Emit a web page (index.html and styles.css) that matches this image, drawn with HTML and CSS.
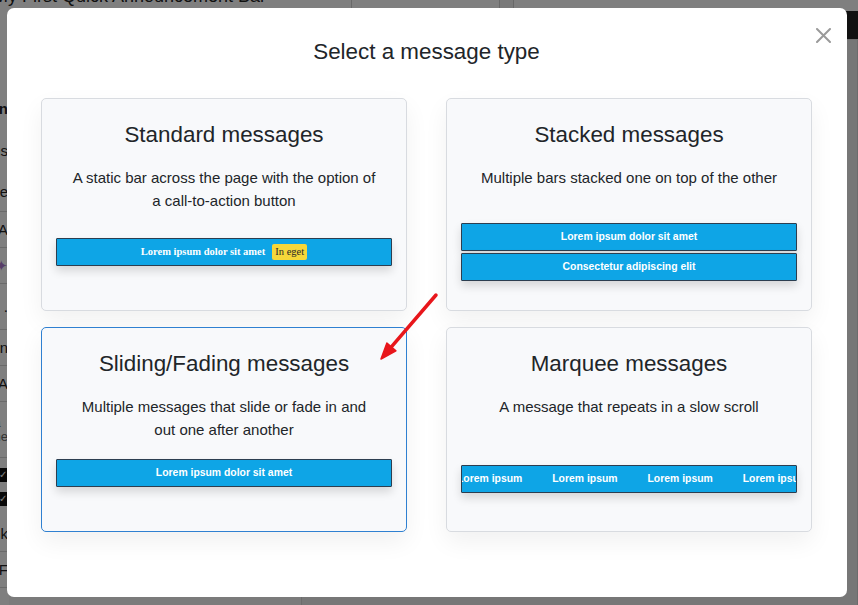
FILE: index.html
```html
<!DOCTYPE html>
<html lang="en">
<head>
<meta charset="utf-8">
<title>Select a message type</title>
<link rel="stylesheet" href="styles.css">
</head>
<body>
<div class="page">
  <aside class="rail">
    <div class="rail-row rail-row--tall"></div>
    <div class="rail-row rail-row--r1"><b>Section</b></div>
    <div class="rail-row rail-row--r2">Options</div>
    <div class="rail-row rail-row--r3 rail-row--line">Title</div>
    <div class="rail-row rail-row--line">Text A</div>
    <div class="rail-row rail-row--line"><span class="rail-diamond">&#10022;</span></div>
    <div class="rail-row rail-row--line rail-row--mid">.</div>
    <div class="rail-row rail-row--line">Margin</div>
    <div class="rail-row rail-row--line">Size A</div>
    <div class="rail-row rail-row--two rail-row--line"><span class="rail-muted">data<br>name</span></div>
    <div class="rail-row rail-row--checks"><span class="rail-check">&#10003;</span><span class="rail-check">&#10003;</span></div>
    <div class="rail-row rail-row--line">Link</div>
    <div class="rail-row rail-row--line">F</div>
  </aside>
  <main class="main">
    <header class="main-head">
      <div class="head-title">My First Quick Announcement Bar</div>
      <div class="head-cell"></div>
      <div class="head-cell head-cell--grey"></div>
      <div class="head-side">
        <div class="head-dark"></div>
      </div>
    </header>
    <div class="main-body">
      <div class="body-col"></div>
      <div class="body-col body-col--wide"></div>
    </div>
  </main>
</div>

<div class="overlay">
  <div class="modal">
    <button class="modal-close" aria-label="Close">
      <svg viewBox="0 0 15 15" width="15" height="15"><path d="M1 1 L14 14 M14 1 L1 14" stroke="#9a9a9a" stroke-width="2" stroke-linecap="round" fill="none"/></svg>
    </button>
    <h2 class="modal-title">Select a message type</h2>
    <div class="type-grid">
      <div class="type-card">
        <h3 class="type-title">Standard messages</h3>
        <p class="type-desc">A static bar across the page with the option of a call-to-action button</p>
        <div class="preview preview--standard">
          <div class="bar bar--serif">Lorem ipsum dolor sit amet <span class="bar-badge">In eget</span></div>
        </div>
      </div>
      <div class="type-card">
        <h3 class="type-title">Stacked messages</h3>
        <p class="type-desc">Multiple bars stacked one on top of the other</p>
        <div class="preview preview--stacked">
          <div class="bar">Lorem ipsum dolor sit amet</div>
          <div class="bar">Consectetur adipiscing elit</div>
        </div>
      </div>
      <div class="type-card type-card--selected">
        <h3 class="type-title">Sliding/Fading messages</h3>
        <p class="type-desc">Multiple messages that slide or fade in and out one after another</p>
        <div class="preview preview--sliding">
          <div class="bar">Lorem ipsum dolor sit amet</div>
        </div>
      </div>
      <div class="type-card">
        <h3 class="type-title">Marquee messages</h3>
        <p class="type-desc">A message that repeats in a slow scroll</p>
        <div class="preview preview--marquee">
          <div class="bar bar--marquee">
            <div class="marquee-track">
              <span>Lorem ipsum</span><span>Lorem ipsum</span><span>Lorem ipsum</span><span>Lorem ipsum</span>
            </div>
          </div>
        </div>
      </div>
    </div>
    <svg class="annotation" viewBox="0 0 840 589">
      <line x1="429" y1="287" x2="384.4" y2="338.9" stroke="#e8161b" stroke-width="3.5" stroke-linecap="round"/>
      <polygon points="374,351 388.9,342.8 379.9,335" fill="#e8161b" stroke="#e8161b" stroke-width="1.5" stroke-linejoin="round"/>
    </svg>
  </div>
</div>
</body>
</html>
```

FILE: styles.css
```css
* { box-sizing: border-box; }

html, body {
  margin: 0;
  height: 100%;
}

body {
  font-family: "Liberation Sans", Arial, Helvetica, sans-serif;
  background: #efefef;
  overflow: hidden;
  color: #222;
}

/* ---------- underlying page (dimmed by overlay) ---------- */
.page {
  display: flex;
  height: 605px;
}

.rail {
  width: 9px;
  flex: none;
  background: #fff;
  display: flex;
  flex-direction: column;
  overflow: hidden;
  font-size: 15px;
  color: #222;
}

.rail-row {
  display: flex;
  justify-content: flex-end;
  align-items: center;
  white-space: nowrap;
  height: 36px;
  padding-right: 1px;
}

.rail-row--tall { height: 88px; }
.rail-row--r1 { height: 40px; }
.rail-row--r2 { height: 44px; }
.rail-row--r3 { height: 40px; }
.rail-row--line { border-bottom: 1px solid #d5d5d5; }
.rail-row--mid { height: 46px; }
.rail-row--two { height: 56px; font-size: 13px; line-height: 14px; }
.rail-row--checks {
  height: 58px;
  flex-direction: column;
  align-items: flex-end;
  justify-content: center;
  gap: 10px;
}

.rail-diamond { color: #b07ad0; }
.rail-muted { color: #666; }

.rail-check {
  display: block;
  width: 14px;
  height: 14px;
  background: #111;
  color: #fff;
  font-size: 10px;
  line-height: 14px;
  text-align: right;
  padding-right: 1px;
}

.main {
  flex: 1;
  min-width: 0;
  display: flex;
  flex-direction: column;
}

.main-head {
  display: flex;
  height: 40px;
  background: #fff;
  border-bottom: 1px solid #ddd;
}

.head-title {
  width: 359px;
  flex: none;
  margin-top: -14px;
  margin-left: -16px;
  font-size: 18px;
  white-space: nowrap;
  color: #222;
  border-right: 1px solid #d0d0d0;
}

.head-cell {
  width: 148px;
  flex: none;
  border-right: 1px solid #d0d0d0;
  background: #fff;
}

.head-cell--grey {
  width: 14px;
  background: #f4f4f4;
}

.head-side {
  flex: 1;
  display: flex;
  flex-direction: column;
  justify-content: flex-end;
}

.head-dark {
  height: 28px;
  background: #222;
}

.main-body {
  flex: 1;
  display: flex;
}

.body-col {
  width: 293px;
  background: #f7f7f7;
  border-right: 1px solid #d8d8d8;
}

.body-col--wide {
  flex: 1;
  background: #efefef;
}

/* ---------- overlay + modal ---------- */
.overlay {
  position: fixed;
  inset: 0;
  background: rgba(0, 0, 0, 0.5);
  padding: 8px 11px 8px 7px;
  display: flex;
}

.modal {
  flex: 1;
  min-width: 0;
  position: relative;
  background: #fff;
  border-radius: 7px;
  padding: 30px 35px 0 34px;
}

.modal-close {
  position: absolute;
  top: 20px;
  right: 16px;
  width: 15px;
  height: 15px;
  padding: 0;
  border: 0;
  background: none;
  display: flex;
}

.annotation {
  position: absolute;
  left: 0;
  top: 0;
  width: 840px;
  height: 589px;
  pointer-events: none;
}

.modal-title {
  margin: 0;
  text-align: center;
  font-size: 22.4px;
  line-height: 28px;
  font-weight: 400;
  color: #212529;
}

.type-grid {
  margin-top: 32px;
  display: grid;
  grid-template-columns: 366px 366px;
  grid-template-rows: 213px 205px;
  column-gap: 39px;
  row-gap: 16px;
}

.type-card {
  background: #f8f9fb;
  border: 1px solid #d8dbe0;
  border-radius: 5px;
  box-shadow: 0 10px 24px rgba(0, 0, 0, 0.06);
  padding: 22px 14px 0;
  text-align: center;
}

.type-card--selected {
  border-color: #2f80d1;
}

.type-title {
  margin: 0;
  font-size: 22.4px;
  line-height: 28px;
  font-weight: 400;
  color: #212529;
}

.type-desc {
  margin: 17px 15px 0;
  font-size: 15px;
  line-height: 23px;
  color: #212529;
}

.preview {
  display: flex;
  flex-direction: column;
  gap: 2px;
}

.preview--standard { margin-top: 26px; }
.preview--stacked { margin-top: 34px; }
.preview--sliding { margin-top: 18px; }
.preview--marquee { margin-top: 47px; }

.bar {
  height: 28px;
  background: #0ea5e6;
  border: 1px solid #2c3e50;
  border-radius: 1px;
  box-shadow: 0 5px 10px rgba(0, 0, 0, 0.14);
  color: #fff;
  font-size: 10.4px;
  font-weight: 700;
  line-height: 26px;
  text-align: center;
  white-space: nowrap;
}

.bar--serif {
  font-family: "Liberation Serif", "Times New Roman", serif;
  font-size: 10.5px;
  display: flex;
  justify-content: center;
  align-items: center;
  gap: 7px;
}

.bar-badge {
  background: #f5d73a;
  color: #2a2a2a;
  font-weight: 400;
  line-height: 16px;
  padding: 0 3px;
  border-radius: 2px;
}

.bar--marquee {
  overflow: hidden;
  text-align: left;
}

.marquee-track {
  display: flex;
  gap: 30px;
  margin-left: -5px;
}
```
